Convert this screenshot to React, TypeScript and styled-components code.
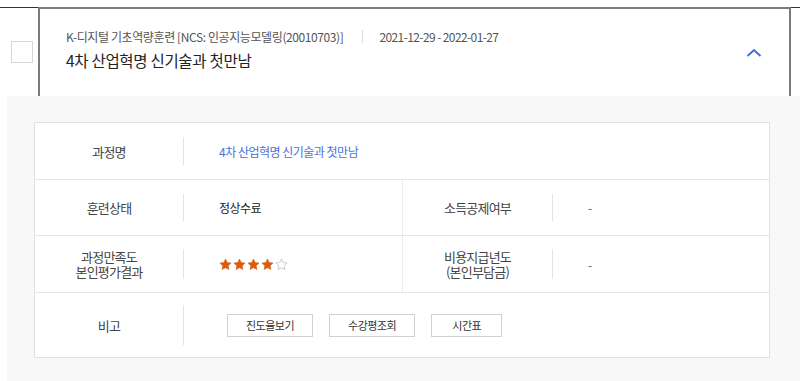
import React from "react";
import styled, { createGlobalStyle } from "styled-components";

const GlobalStyle = createGlobalStyle`
  body {
    margin: 0;
    background: #fff;
    font-family: "Noto Sans CJK KR", "Noto Sans", sans-serif;
  }
`;

const Page = styled.div`
  width: 800px;
  padding-top: 7px;
  overflow: hidden;
`;

const HeaderRow = styled.div`
  display: flex;
  border-top: 1px solid #1d3660;
`;

const CheckCell = styled.div`
  width: 38px;
  box-sizing: border-box;
  padding-left: 11px;
  display: flex;
  align-items: center;
`;

const CheckBox = styled.span`
  width: 22px;
  height: 22px;
  box-sizing: border-box;
  border: 1px solid #d6d6d6;
  background: #fff;
`;

const Card = styled.div`
  width: 753px;
  height: 89px;
  margin-top: -1px;
  box-sizing: border-box;
  border: 2px solid #7b7b7b;
  border-bottom: none;
  background: #fff;
  display: flex;
  align-items: center;
  justify-content: space-between;
  padding: 0 27px 0 26px;
`;

const CardText = styled.div`
  display: flex;
  flex-direction: column;
  gap: 3px;
  padding-bottom: 7px;
`;

const Meta = styled.div`
  display: flex;
  align-items: center;
  font-size: 12px;
  letter-spacing: -0.4px;
  color: #555;
  line-height: 18px;
`;

const Period = styled.span`
  letter-spacing: -0.6px;
`;

const Sep = styled.span`
  width: 1px;
  height: 13px;
  background: #dcdcdc;
  margin: 0 16px 0 19px;
`;

const Title = styled.div`
  font-size: 15.5px;
  letter-spacing: -0.3px;
  color: #222;
  line-height: 22px;
`;

const Toggle = styled.button`
  border: none;
  background: none;
  padding: 0;
  display: flex;
  cursor: pointer;
`;

const Detail = styled.div`
  margin-left: 7px;
  background: #f8f8f8;
  padding: 26px 30px 30px 27px;
`;

const Table = styled.div`
  width: 736px;
  box-sizing: border-box;
  border: 1px solid #e2e2e2;
  background: #fff;
`;

const Row = styled.div<{ $h: number; $wide?: boolean }>`
  display: grid;
  grid-template-columns: ${(p) => (p.$wide ? "149px 1fr" : "149px 219px 150px 1fr")};
  height: ${(p) => p.$h}px;
  border-bottom: 1px solid #e6e6e6;
  &:last-child {
    border-bottom: none;
  }
`;

const Label = styled.div<{ $m?: number }>`
  margin: ${(p) => p.$m ?? 14}px 0;
  border-right: 1px solid #dfe3ea;
  display: flex;
  align-items: center;
  justify-content: center;
  text-align: center;
  font-size: 13px;
  letter-spacing: -0.8px;
  line-height: 15px;
  color: #444;
`;

const Value = styled.div<{ $line?: boolean; $tone?: "blue" | "dark" }>`
  display: flex;
  align-items: center;
  padding-left: 35px;
  font-size: 12px;
  letter-spacing: -0.5px;
  color: ${(p) => (p.$tone === "blue" ? "#4b6fe0" : p.$tone === "dark" ? "#222" : "#666")};
  border-right: ${(p) => (p.$line ? "1px solid #ebebeb" : "none")};
`;

const Stars = styled.div`
  display: flex;
  gap: 1px;
  margin-top: 1px;
`;

const Buttons = styled.div`
  display: flex;
  gap: 16px;
  margin-left: 8px;
`;

const SmallButton = styled.button`
  height: 23px;
  min-width: 71px;
  padding: 0 18px;
  box-sizing: border-box;
  border: 1px solid #d0d0d0;
  background: #fff;
  font-family: inherit;
  font-size: 11px;
  letter-spacing: -0.5px;
  color: #333;
  cursor: pointer;
`;

function Star({ filled }: { filled: boolean }) {
  return (
    <svg width="13" height="13" viewBox="0 0 24 24">
      <path
        d="M12 1.8l3.1 6.6 7.2.9-5.3 5 1.4 7.1L12 17.9l-6.4 3.5 1.4-7.1-5.3-5 7.2-.9z"
        fill={filled ? "#dc5b0e" : "none"}
        stroke={filled ? "#dc5b0e" : "#c4c4c4"}
        strokeWidth={filled ? 1 : 1.6}
        strokeLinejoin="round"
      />
    </svg>
  );
}

export default function App() {
  const rating = 4;
  return (
    <>
      <GlobalStyle />
      <Page>
        <HeaderRow>
          <CheckCell>
            <CheckBox />
          </CheckCell>
          <Card>
            <CardText>
              <Meta>
                <span>K-디지털 기초역량훈련 [NCS: 인공지능모델링(20010703)]</span>
                <Sep />
                <Period>2021-12-29 - 2022-01-27</Period>
              </Meta>
              <Title>4차 산업혁명 신기술과 첫만남</Title>
            </CardText>
            <Toggle aria-label="접기">
              <svg width="16" height="9" viewBox="0 0 16 9">
                <polyline points="1.5,8 8,2 14.5,8" fill="none" stroke="#3e6fdc" strokeWidth="2" />
              </svg>
            </Toggle>
          </Card>
        </HeaderRow>
        <Detail>
          <Table>
            <Row $h={56} $wide>
              <Label>과정명</Label>
              <Value $tone="blue">4차 산업혁명 신기술과 첫만남</Value>
            </Row>
            <Row $h={55}>
              <Label>훈련상태</Label>
              <Value $line $tone="dark">정상수료</Value>
              <Label>소득공제여부</Label>
              <Value>-</Value>
            </Row>
            <Row $h={56}>
              <Label $m={13}>
                과정만족도
                <br />
                본인평가결과
              </Label>
              <Value $line>
                <Stars>
                  {[0, 1, 2, 3, 4].map((i) => (
                    <Star key={i} filled={i < rating} />
                  ))}
                </Stars>
              </Value>
              <Label $m={13}>
                비용지급년도
                <br />
                (본인부담금)
              </Label>
              <Value>-</Value>
            </Row>
            <Row $h={64} $wide>
              <Label $m={12}>비고</Label>
              <Value>
                <Buttons>
                  <SmallButton>진도율보기</SmallButton>
                  <SmallButton>수강평조회</SmallButton>
                  <SmallButton>시간표</SmallButton>
                </Buttons>
              </Value>
            </Row>
          </Table>
        </Detail>
      </Page>
    </>
  );
}
